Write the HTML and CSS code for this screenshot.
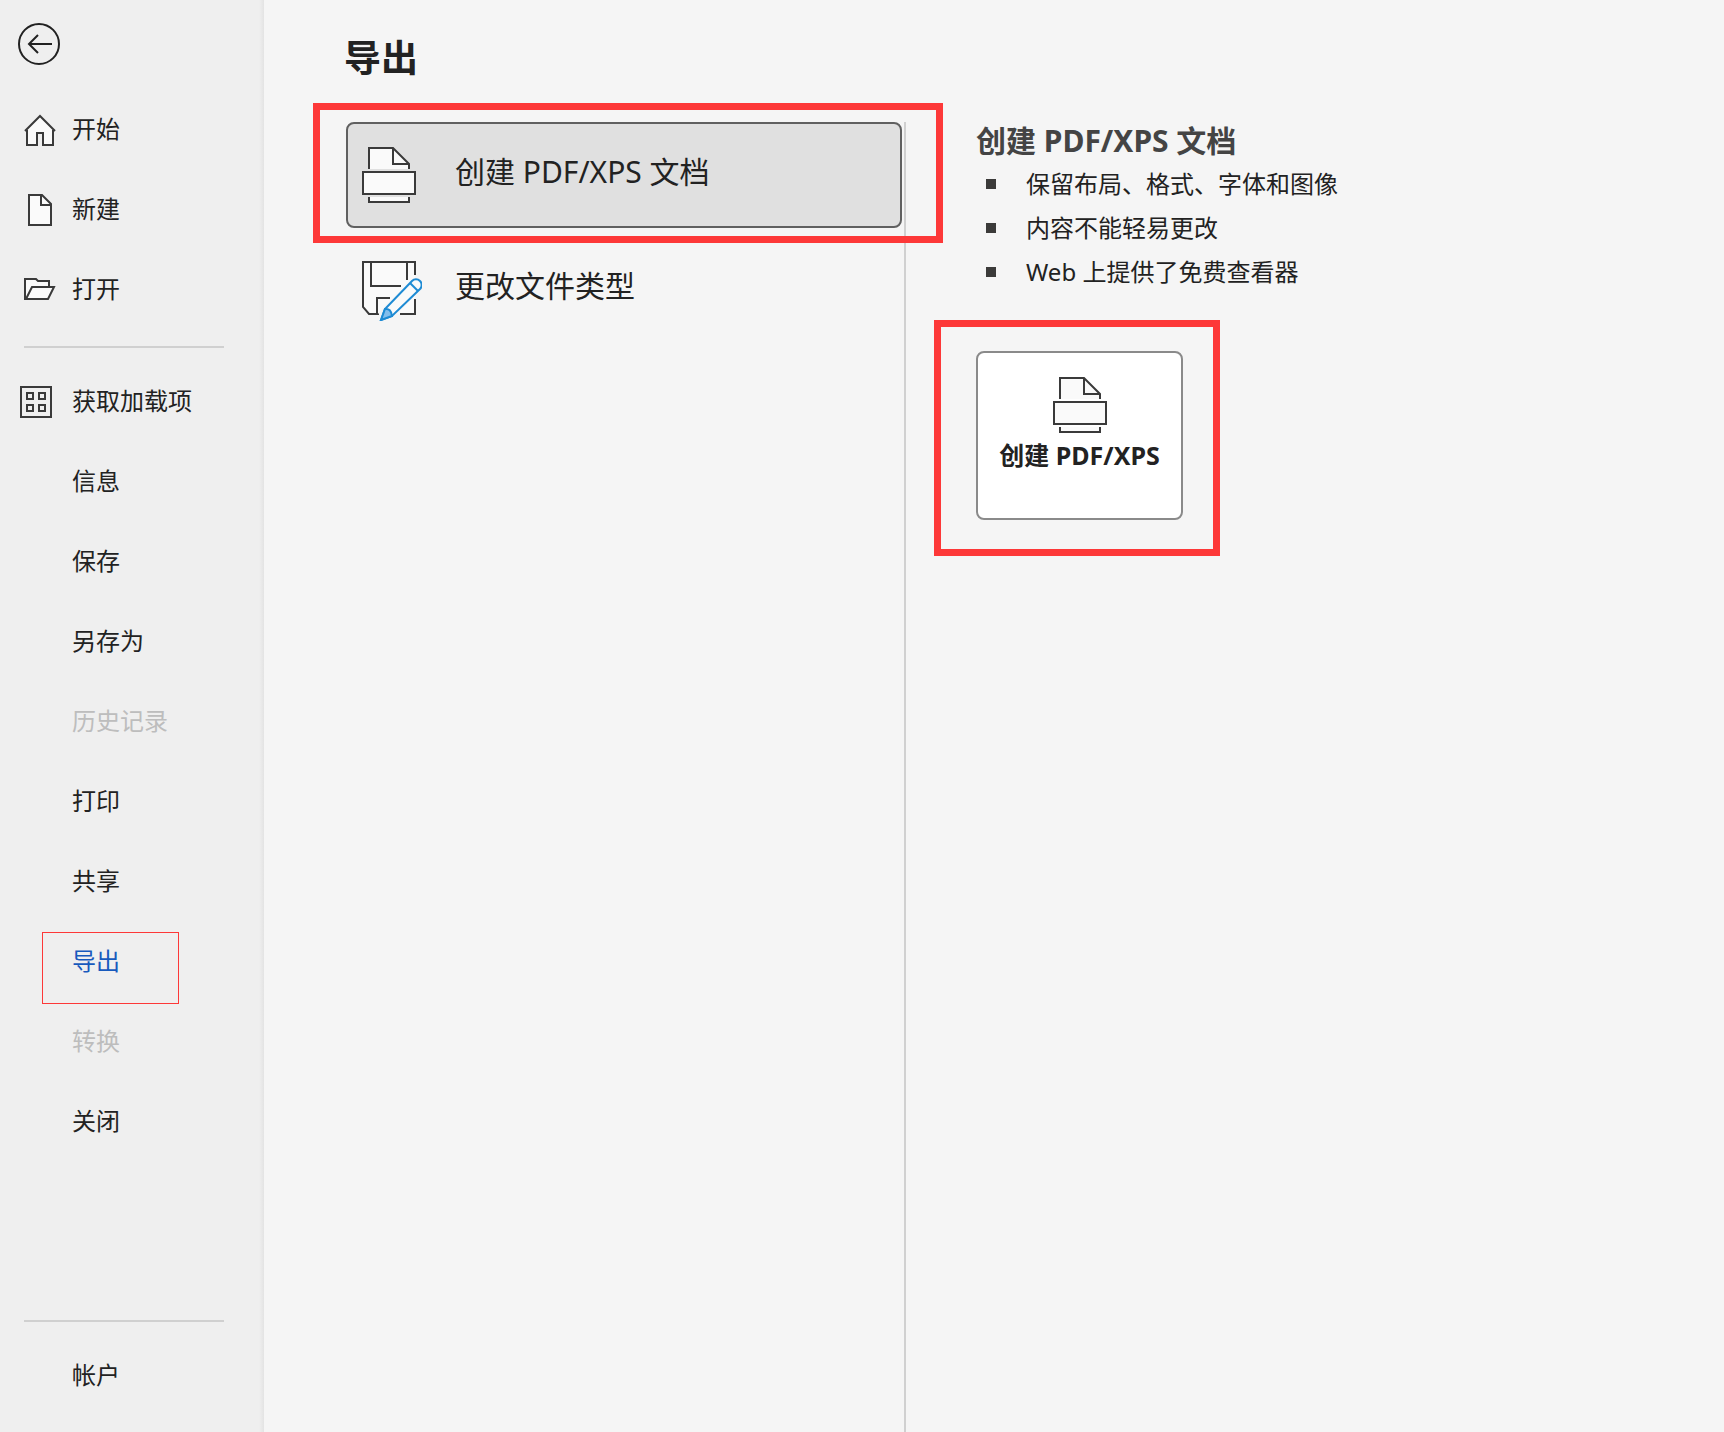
FILE: index.html
```html
<!DOCTYPE html>
<html lang="zh-CN">
<head>
    <meta charset="utf-8">
    <title>导出</title>
    <meta name="viewport" content="width=device-width, initial-scale=1">
    <link rel="stylesheet" href="styles.css">
</head>

<body>
    <div class="app">
        <nav class="sidebar">
            <button type="button" class="back-btn" aria-label="返回">
                <svg width="42" height="42" viewBox="0 0 42 42">
                    <circle cx="21" cy="21" r="20" />
                    <path d="M34 21H11M20 12L11 21L20 30" />
                </svg>
            </button>

            <button type="button" class="nav-item">
                <svg class="nav-icon" width="40" height="40" viewBox="0 0 40 40">
                    <path class="paper" d="M7 20V35H17V23H23V35H33V20L20 7Z" stroke="none" />
                    <path d="M5 21L20 6L35 21M7 20V35H17V23H23V35H33V20" />
                </svg>
                <span>开始</span>
            </button>
            <button type="button" class="nav-item">
                <svg class="nav-icon" width="40" height="40" viewBox="0 0 40 40">
                    <path class="paper" d="M9 5H22L31 14V35H9Z" />
                    <path d="M21 5V15H31" />
                </svg>
                <span>新建</span>
            </button>
            <button type="button" class="nav-item">
                <svg class="nav-icon" width="40" height="40" viewBox="0 0 40 40">
                    <path class="paper" d="M5 29V9H16L18 11H29V17H34L28 29Z" stroke="none" />
                    <path d="M29 17V11H18L16 9H5V29H28L34 17H12L6 29" />
                </svg>
                <span>打开</span>
            </button>
            <hr class="divider">
            <button type="button" class="nav-item">
                <svg class="nav-icon" width="40" height="40" viewBox="0 0 40 40">
                    <path d="M1 5H31V35H1ZM7 11H13V17H7ZM19 11H25V17H19ZM7 23H13V29H7ZM19 23H25V29H19Z" />
                </svg>
                <span>获取加载项</span>
            </button>
            <button type="button" class="nav-item text-only">信息</button>
            <button type="button" class="nav-item text-only">保存</button>
            <button type="button" class="nav-item text-only">另存为</button>
            <button type="button" class="nav-item text-only" disabled>历史记录</button>
            <button type="button" class="nav-item text-only">打印</button>
            <button type="button" class="nav-item text-only">共享</button>
            <button type="button" class="nav-item text-only active">导出<span class="mark mark-nav"></span></button>
            <button type="button" class="nav-item text-only" disabled>转换</button>
            <button type="button" class="nav-item text-only">关闭</button>

            <div class="sidebar-footer">
                <hr class="divider">
                <button type="button" class="nav-item text-only">帐户</button>
            </div>
        </nav>

        <main class="main">
            <h1>导出</h1>
            <div class="columns">
                <div class="options">
                    <button type="button" class="option selected">
                        <svg width="60" height="60" viewBox="0 -2 60 60">
                            <path class="paper" d="M7 22V1H31L47 17V22" />
                            <path d="M31 1V17H47" />
                            <path class="paper" d="M1 25H53V47H1ZM7 50V55H47V50" />
                        </svg>
                        <span class="option-label">创建 PDF/XPS 文档</span>
                        <span class="mark mark-option"></span>
                    </button>
                    <button type="button" class="option">
                        <svg width="60" height="64" viewBox="0 -4 60 64">
                            <path class="paper" d="M1 1H53V53H7L1 46Z" stroke="none" />
                            <path d="M53 14V1H1V46L7 53H17M53 38V53H38" />
                            <path d="M9 1V25H39M45 1V19M15 53V37H28" />
                            <path class="pencil-gap" d="M21 57L56 22" />
                            <path class="pencil" d="M19 59L23 48L50 20A5 5 0 0 1 58 28L30 55Z" />
                            <path class="pencil-tip" d="M19 59L23 48Q29 47 30 55Z" />
                            <path class="pencil" d="M48 22L56 30" />
                        </svg>
                        <span class="option-label">更改文件类型</span>
                    </button>
                </div>

                <section class="details">
                    <h2>创建 PDF/XPS 文档</h2>
                    <ul>
                        <li>保留布局、格式、字体和图像</li>
                        <li>内容不能轻易更改</li>
                        <li>Web 上提供了免费查看器</li>
                    </ul>
                    <button type="button" class="create-btn">
                        <svg width="54" height="56" viewBox="0 0 54 56">
                            <path class="paper" d="M7 22V1H31L47 17V22" />
                            <path d="M31 1V17H47" />
                            <path class="paper" d="M1 25H53V47H1ZM7 50V55H47V50" />
                        </svg>
                        <span>创建 PDF/XPS</span>
                        <span class="mark mark-create"></span>
                    </button>
                </section>
            </div>
        </main>
    </div>
</body>
</html>
```

FILE: styles.css
```css
body {
    margin: 0;
    font-family: "Noto Sans", "Noto Sans CJK SC", sans-serif;
    font-size: 24px;
    color: #222;
    background-color: #f5f5f5;
}

button {
    margin: 0;
    padding: 0;
    border: none;
    background: none;
    font: inherit;
    color: inherit;
    cursor: pointer;
}

svg {
    display: block;
    flex-shrink: 0;
    fill: none;
    stroke: #3a3a3a;
    stroke-width: 2;
}

.paper {
    fill: #fafafa;
}

.app {
    display: flex;
    min-height: 100vh;
}

/* sidebar */
.sidebar {
    display: flex;
    flex-direction: column;
    flex-shrink: 0;
    box-sizing: border-box;
    width: 264px;
    padding: 23px 0 16px;
    background: linear-gradient(to left, #e3e3e3, #efefef 5px);
}

.back-btn {
    align-self: flex-start;
    margin: 0 0 25px 18px;
}

.back-btn svg {
    stroke: #222;
}

.nav-item {
    position: relative;
    display: flex;
    align-items: center;
    gap: 12px;
    box-sizing: border-box;
    width: 100%;
    height: 80px;
    padding: 0 0 2px 20px;
    line-height: 32px;
    text-align: left;
}

.nav-icon {
    padding-top: 2px;
}

.text-only {
    padding-left: 72px;
}

.nav-item:disabled {
    color: #bdbdbd;
    cursor: default;
}

.active {
    color: #185abd;
}

.divider {
    height: 2px;
    margin: 16px 40px 14px 24px;
    border: none;
    background-color: #d0d0d0;
}

.sidebar-footer {
    margin-top: auto;
}

/* main area */
.main {
    display: flex;
    flex: 1;
    flex-direction: column;
    min-width: 0;
    padding-left: 80px;
}

h1 {
    margin: 34px 0 40px;
    font-size: 37px;
    line-height: 48px;
}

.columns {
    display: flex;
    flex: 1;
}

.options {
    display: flex;
    flex: 0 0 556px;
    flex-direction: column;
    gap: 8px;
    padding: 0 2px;
    border-right: 2px solid #d0d0d0;
}

.option {
    position: relative;
    display: flex;
    align-items: center;
    gap: 33px;
    box-sizing: border-box;
    width: 100%;
    height: 106px;
    padding-left: 14px;
    border: 2px solid transparent;
    border-radius: 8px;
    font-size: 30px;
    line-height: 40px;
    text-align: left;
}

.option-label {
    padding-bottom: 6px;
}

.selected {
    border-color: #606060;
    background-color: #e0e0e0;
}

.pencil-gap {
    stroke: #f5f5f5;
    stroke-width: 14;
}

.pencil {
    fill: #fafafa;
    stroke: #1e8bd4;
}

.pencil-tip {
    fill: #83beec;
    stroke: #1e8bd4;
}

.details {
    flex: 1;
    padding-left: 70px;
}

h2 {
    margin: 0;
    font-size: 30px;
    line-height: 38px;
    color: #444;
}

ul {
    margin: 0;
    padding: 2px 0 57px;
    list-style: none;
}

li {
    display: flex;
    align-items: center;
    gap: 30px;
    padding-left: 10px;
    line-height: 44px;
}

li::before {
    content: "";
    width: 10px;
    height: 10px;
    background-color: #3b3a39;
}

.create-btn {
    position: relative;
    display: flex;
    flex-direction: column;
    align-items: center;
    gap: 4px;
    box-sizing: border-box;
    min-width: 207px;
    height: 169px;
    padding: 24px 20px;
    border: 2px solid #8a8a8a;
    border-radius: 8px;
    background-color: #fff;
    font-size: 25px;
    font-weight: bold;
    line-height: 36px;
}

/* red callout frames */
.mark {
    position: absolute;
    border: 7px solid #fd3838;
    pointer-events: none;
}

.mark-nav {
    inset: 10px 85px -2px 42px;
    border-width: 1px;
}

.mark-option {
    inset: -21px -43px -17px -35px;
}

.mark-create {
    inset: -33px -39px -38px -44px;
}
```
